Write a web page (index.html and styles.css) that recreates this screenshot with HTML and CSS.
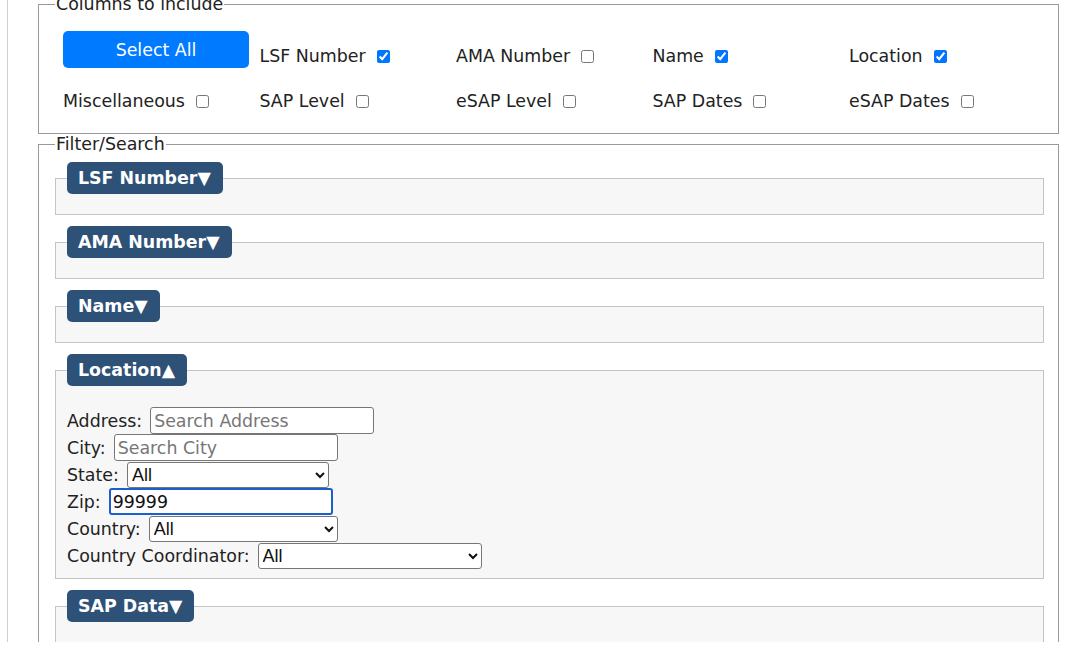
FILE: index.html
```html
<!DOCTYPE html>
<html>
<head>
<meta charset="utf-8">
<link rel="stylesheet" href="styles.css">
</head>
<body>
<div class="page">
  <fieldset class="box cols">
    <legend>Columns to include</legend>
    <div class="col-grid">
      <button class="btn-primary" type="button">Select All</button>
      <label class="opt">LSF Number <input type="checkbox" checked></label>
      <label class="opt">AMA Number <input type="checkbox"></label>
      <label class="opt">Name <input type="checkbox" checked></label>
      <label class="opt">Location <input type="checkbox" checked></label>
      <label class="opt">Miscellaneous <input type="checkbox"></label>
      <label class="opt">SAP Level <input type="checkbox"></label>
      <label class="opt">eSAP Level <input type="checkbox"></label>
      <label class="opt">SAP Dates <input type="checkbox"></label>
      <label class="opt">eSAP Dates <input type="checkbox"></label>
    </div>
  </fieldset>
  <fieldset class="box filter">
    <legend>Filter/Search</legend>
    <section class="panel first"><button class="tab" type="button">LSF Number▼</button></section>
    <section class="panel"><button class="tab" type="button">AMA Number▼</button></section>
    <section class="panel"><button class="tab" type="button">Name▼</button></section>
    <section class="panel">
      <button class="tab" type="button">Location▲</button>
      <div class="fields">
        <div class="field"><span>Address:</span><input class="txt" type="text" placeholder="Search Address"></div>
        <div class="field"><span>City:</span><input class="txt" type="text" placeholder="Search City"></div>
        <div class="field"><span>State:</span><select class="sel state"><option>All</option></select></div>
        <div class="field"><span>Zip:</span><input class="txt focus" type="text" value="99999"></div>
        <div class="field"><span>Country:</span><select class="sel country"><option>All</option></select></div>
        <div class="field"><span>Country Coordinator:</span><select class="sel coord"><option>All</option></select></div>
      </div>
    </section>
    <section class="panel"><button class="tab" type="button">SAP Data▼</button></section>
  </fieldset>
</div>
</body>
</html>
```
FILE: styles.css
```css
html, body {
  margin: 0;
  background: #fff;
}
body {
  font-family: "DejaVu Sans", Verdana, sans-serif;
  font-size: 17.4px;
  color: #222;
}
.page {
  height: 642px;
  overflow: hidden;
  margin-left: 7px;
  border-left: 1px solid #cfcfcf;
  padding-left: 30px;
  padding-right: 21px;
}
.box {
  border: 1px solid #9a9a9a;
  margin: 0;
  min-width: 0;
  padding: 0 14px 0 16px;
}
.box legend {
  padding: 0 1px;
  line-height: 20px;
  height: 20px;
}
.cols {
  margin-top: -6px;
  padding-top: 17px;
  padding-bottom: 20px;
}
.col-grid {
  display: grid;
  grid-template-columns: repeat(5, 196.5px);
  row-gap: 22px;
  align-items: end;
  margin-left: 8px;
}
.btn-primary {
  justify-self: start;
  width: 186px;
  height: 37px;
  border: none;
  border-radius: 5px;
  background: #007bff;
  color: #fff;
  font: inherit;
  padding: 0;
}
.opt {
  display: flex;
  align-items: center;
  gap: 11px;
  line-height: 22px;
  height: 22px;
  padding-bottom: 1px;
}
.opt input {
  width: 13px;
  height: 13px;
  margin: 0;
}
.filter {
  margin-top: 0;
  padding-top: 8px;
  padding-bottom: 60px;
}
.panel {
  margin-top: 27px;
  border: 1px solid #c4c4c4;
  background: #f7f7f7;
  padding: 0 11px 9px;
}
.panel.first {
  margin-top: 16px;
}
.tab {
  display: block;
  margin: -17px 0 11px;
  height: 32px;
  padding: 0 12px 0 11px;
  border: none;
  border-radius: 5px;
  background: #2e5177;
  color: #fff;
  font: inherit;
  font-weight: bold;
}
.fields {
  padding-top: 10px;
  display: flex;
  flex-direction: column;
}
.field {
  display: flex;
  align-items: center;
  gap: 8px;
  height: 27px;
}
.txt {
  box-sizing: border-box;
  width: 224px;
  height: 27px;
  margin: 0;
  padding: 0 3px;
  border: 1px solid #767676;
  border-radius: 3px;
  background: #fff;
  font: inherit;
  color: #111;
}
.txt::placeholder {
  color: #777;
}
.txt.focus {
  border: 2px solid #1a5fcc;
  padding: 0 2px;
}
.sel {
  box-sizing: border-box;
  height: 26px;
  margin: 0;
  font: inherit;
  font-family: "Liberation Sans", Arial, sans-serif;
  font-size: 18px;
  color: #111;
  background: #fff;
  border: 1px solid #767676;
  border-radius: 3px;
}
.state { width: 202px; }
.country { width: 189px; }
.coord { width: 224px; }
```
